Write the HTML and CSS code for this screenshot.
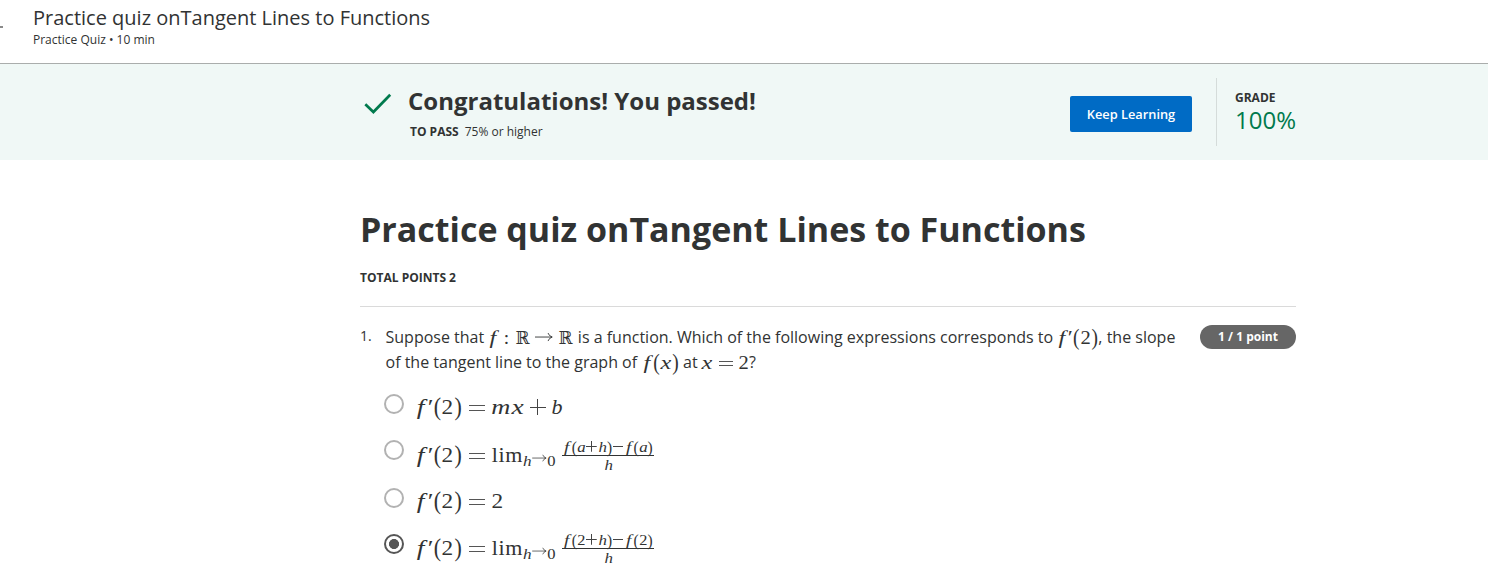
FILE: index.html
```html
<!DOCTYPE html>
<html lang="en">
<head>
<meta charset="utf-8">
<title>Practice quiz onTangent Lines to Functions</title>
<link rel="stylesheet" href="styles.css">
</head>
<body>
<header class="topbar">
  <span class="back"></span>
  <div class="topbar-text">
    <div class="topbar-title">Practice quiz onTangent Lines to Functions</div>
    <div class="topbar-sub">Practice Quiz • 10 min</div>
  </div>
</header>
<section class="banner">
  <div class="banner-inner">
    <svg class="check" width="28" height="22" viewBox="0 0 28 22"><path d="M1.3 11.3 9.4 19 26.2 1.7" fill="none" stroke="#007a4d" stroke-width="2.7"/></svg>
    <div class="result">
      <h2>Congratulations! You passed!</h2>
      <p><b>TO PASS</b><span>75% or higher</span></p>
    </div>
    <button class="keep">Keep Learning</button>
    <div class="grade"><b>GRADE</b><span>100%</span></div>
  </div>
</section>
<main class="quiz">
  <h1>Practice quiz onTangent Lines to Functions</h1>
  <div class="total">TOTAL POINTS 2</div>
  <div class="question">
    <div class="num">1.</div>
    <div class="prompt">
      <div class="line"><span>Suppose that</span><span class="math m1"><i class="f">f</i><span class="colon">:</span><span class="bb">ℝ</span><svg class="arrow" viewBox="0 0 18 10"><path d="M0 5H17M13 1Q14 4 17.2 5Q14 6 13 9"/></svg><span class="bb">ℝ</span></span><span class="mid">is a function. Which of the following expressions corresponds to</span><span class="math m2"><i class="f">f</i><span class="prime">′</span><span class="par">(</span><span class="d">2</span><span class="par">)</span></span><span class="rest">, the slope</span></div>
      <div class="line"><span>of the tangent line to the graph of</span><span class="math m3"><i class="f">f</i><span class="par">(</span><i class="x">x</i><span class="par">)</span></span><span class="at">at</span><span class="math m4"><i class="x">x</i><span class="op eq"></span><span class="d">2</span></span><span>?</span></div>
    </div>
    <div class="pill">1 / 1 point</div>
  </div>
  <div class="options">
    <label class="option o1"><span class="radio"></span><span class="math"><i class="f">f</i><span class="prime">′</span><span class="par">(</span><span class="d">2</span><span class="par">)</span><span class="op eq"></span><i class="m">m</i><i class="x">x</i><span class="op plus"></span><i class="b">b</i></span></label>
    <label class="option o2"><span class="radio"></span><span class="math"><i class="f">f</i><span class="prime">′</span><span class="par">(</span><span class="d">2</span><span class="par">)</span><span class="op eq"></span><span class="lim">lim</span><span class="sub"><i class="h">h</i><svg class="arrow" viewBox="0 0 18 10"><path d="M0 5H17M13 1Q14 4 17.2 5Q14 6 13 9"/></svg><span class="d">0</span></span><span class="frac"><span class="top"><i class="f">f</i><span class="par">(</span><i class="a">a</i><span class="op plus"></span><i class="h">h</i><span class="par">)</span><span class="op minus"></span><i class="f">f</i><span class="par">(</span><i class="a">a</i><span class="par">)</span></span><span class="bottom"><i class="h">h</i></span></span></span></label>
    <label class="option o3"><span class="radio"></span><span class="math"><i class="f">f</i><span class="prime">′</span><span class="par">(</span><span class="d">2</span><span class="par">)</span><span class="op eq"></span><span class="d">2</span></span></label>
    <label class="option o4"><span class="radio on"></span><span class="math"><i class="f">f</i><span class="prime">′</span><span class="par">(</span><span class="d">2</span><span class="par">)</span><span class="op eq"></span><span class="lim">lim</span><span class="sub"><i class="h">h</i><svg class="arrow" viewBox="0 0 18 10"><path d="M0 5H17M13 1Q14 4 17.2 5Q14 6 13 9"/></svg><span class="d">0</span></span><span class="frac"><span class="top"><i class="f">f</i><span class="par">(</span><span class="d">2</span><span class="op plus"></span><i class="h">h</i><span class="par">)</span><span class="op minus"></span><i class="f">f</i><span class="par">(</span><span class="d">2</span><span class="par">)</span></span><span class="bottom"><i class="h">h</i></span></span></span></label>
  </div>
</main>
</body>
</html>
```
FILE: styles.css
```css
* { box-sizing: border-box; }
body { margin: 0; height: 576px; overflow: hidden; background: #fff; color: #313333; font-family: "Open Sans", sans-serif; }
h1, h2, p { margin: 0; }
.topbar { display: flex; height: 64px; border-bottom: 1px solid #aaadac; }
.back { width: 3px; height: 1.5px; margin-top: 26px; background: #8a8a8a; }
.topbar-text { padding: 4px 0 0 30px; }
.topbar-title { font-size: 20px; line-height: 28px; white-space: nowrap; }
.topbar-sub { font-size: 12px; line-height: 16px; }
.banner { height: 96px; background: #f0f8f6; }
.banner-inner { display: flex; width: 936px; height: 96px; margin-left: 360px; }
.check { margin: 29px 0 0 4px; flex: none; }
.result { flex: 1; padding: 20px 0 0 16px; white-space: nowrap; }
.result h2 { font-size: 24px; line-height: 34px; }
.result p { padding: 5px 0 0 2px; font-size: 12px; line-height: 18px; }
.result p span { margin-left: 6px; }
.keep { width: 122px; height: 36px; margin: 32px 24px 0 0; padding: 0; border: 0; border-radius: 2px; background: #006bc5; color: #fff; font: 600 12.8px "Open Sans", sans-serif; }
.grade { display: flex; flex-direction: column; width: 80px; height: 68px; margin-top: 14px; padding: 11px 0 0 18px; border-left: 1px solid #d5dcda; }
.grade b { font-size: 12px; line-height: 18px; }
.grade span { font-size: 24px; line-height: 26px; color: #007a4d; }
.quiz { width: 936px; margin-left: 360px; }
h1 { padding-top: 45px; font-size: 34px; line-height: 48px; white-space: nowrap; }
.total { height: 54px; padding-top: 16px; border-bottom: 1px solid #dadada; font-size: 12px; line-height: 18px; font-weight: 700; }
.question { display: flex; height: 70px; padding-top: 18px; }
.num { width: 25.5px; padding-top: 2px; font-size: 14px; line-height: 18px; }
.prompt { width: 814.5px; font-size: 16px; }
.line { display: flex; height: 25px; line-height: 25px; white-space: nowrap; }
.pill { width: 96px; height: 24px; border-radius: 12px; background: #666; color: #fff; font-size: 12px; line-height: 24px; font-weight: 700; text-align: center; }

.math { display: inline-flex; flex: none; font-family: "Liberation Serif", serif; font-size: 19.4px; white-space: nowrap; }
.math > *, .top > *, .sub > * { flex: none; text-align: center; }
.math svg { flex: none; }
.f { width: .6em; transform: scaleX(1.25); }
.prime { width: .25em; transform: scaleX(1.2); }
.par { width: .38em; transform: scaleY(1.14); }
.d { width: .57em; transform: scaleX(1.06); }
.x { width: .6em; transform: scaleX(1.25); }
.a { width: .57em; transform: scaleX(1.1); }
.h { width: .6em; transform: scaleX(1.1); }
.m { width: .9em; transform: scaleX(1.2); }
.b { width: .5em; }
.bb { width: .72em; font-family: "DejaVu Serif", "DejaVu Sans", serif; font-size: .94em; transform: scaleX(.92); }
.colon { width: .84em; }
.arrow { width: .93em; height: .52em; align-self: center; }
.arrow path { fill: none; stroke: currentColor; stroke-width: .9; }
.op { align-self: center; width: .75em; height: .75em; }
.eq { height: .28em; margin: .12em .27em 0 .3em; border: solid #555; border-width: 1px 0; }
.plus { margin: 0 .24em; background: linear-gradient(#444, #444) center / 100% 1px no-repeat, linear-gradient(#444, #444) center / 1px 100% no-repeat; }
.minus { background: linear-gradient(#444, #444) center / 100% 1px no-repeat; }
.m1 { margin-left: 2.5px; }
.m1 .arrow { margin: 0 5px 0 7px; }
.mid { margin-left: 7px; }
.m2 { margin-left: 3px; }
.m3 { margin-left: 4px; }
.m4 .eq { margin-left: .33em; margin-right: .24em; }
.at { margin: 0 3px 0 4px; }

.option { display: flex; height: 47px; padding-left: 24px; }
.radio { flex: none; width: 20px; height: 20px; margin: 17px 10px 0 0; border: 2px solid #b2b2b2; border-radius: 50%; }
.o2 .radio, .o4 .radio { margin-top: 16px; }
.radio.on { border-color: #565656; background: radial-gradient(circle, #565656 4.7px, transparent 5.3px); }
.option .math { height: 40px; margin-top: 10px; font-size: 22px; line-height: 40px; }
.option .math > .f { margin-right: .02em; }
.o2 .math { margin-top: 11px; }
.o3 .math { margin-top: 10px; }
.lim { width: 32px; letter-spacing: .6px; }
.sub { display: flex; width: 32px; padding-top: 6px; font-size: 15.6px; line-height: 40px; }
.sub .arrow { width: 15px; }
.sub .h, .sub .d { width: 8.7px; }
.frac { width: 92px; margin-left: 7px; font-size: 15.4px; }
.top { display: flex; height: 18px; margin-top: 2.5px; line-height: 17px; border-bottom: 1px solid currentColor; }
.top .plus, .top .minus { width: .68em; height: .68em; margin: 1px .05em 0; }
.top .par { width: .34em; }
.bottom { display: flex; justify-content: center; height: 18px; line-height: 18px; }
```
